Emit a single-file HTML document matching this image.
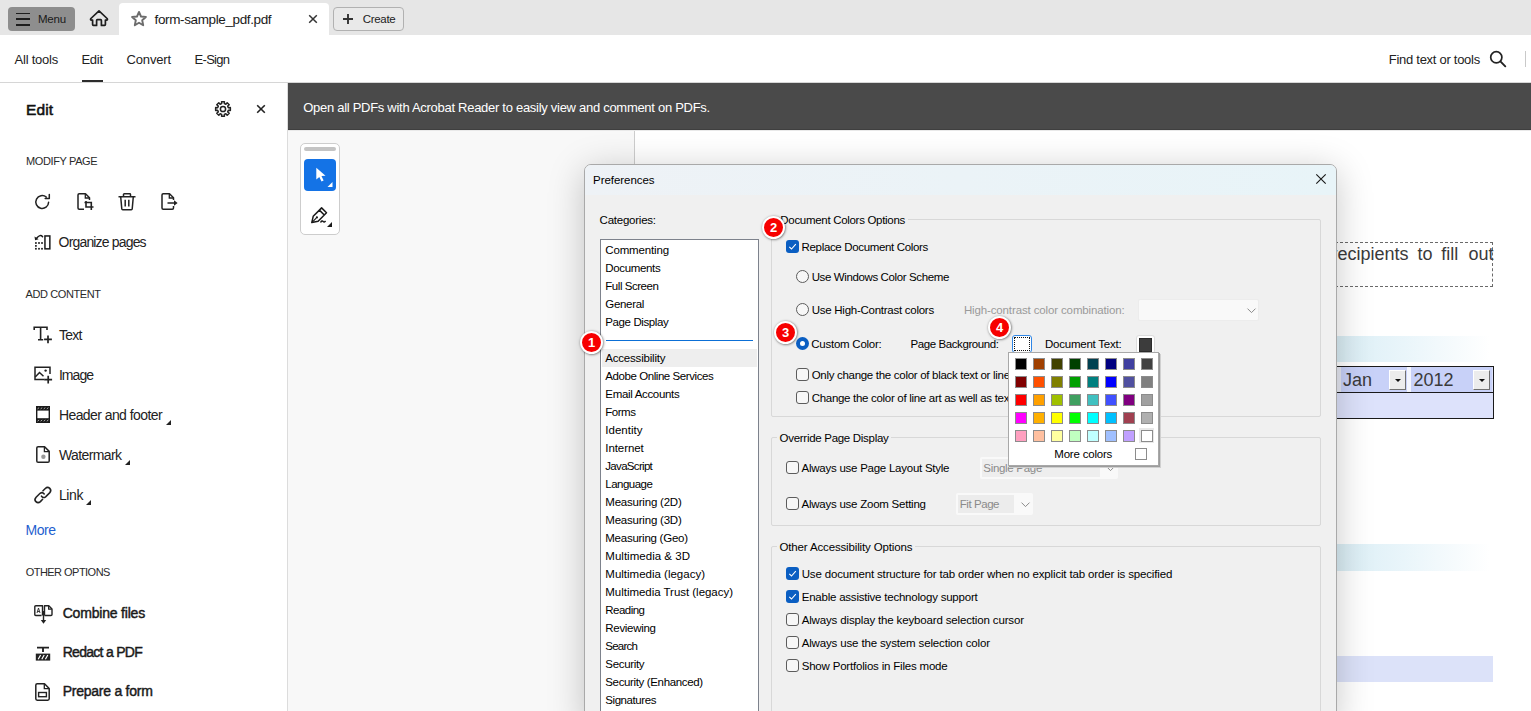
<!DOCTYPE html>
<html><head><meta charset="utf-8">
<style>
*{box-sizing:border-box;margin:0;padding:0}
html,body{width:1531px;height:711px;overflow:hidden;background:#fff;font-family:"Liberation Sans",sans-serif;position:relative}
.a{position:absolute}
.t{position:absolute;white-space:nowrap;line-height:0;font-family:"Liberation Sans",sans-serif}
svg{position:absolute;overflow:visible}
.cb{position:absolute;width:13px;height:13px;border:1px solid #5c5c5c;border-radius:3px;background:#f7f7f7}
.cbc{position:absolute;width:13px;height:13px;border-radius:3px;background:#0a5ec2}
.rd{position:absolute;width:13px;height:13px;border:1px solid #5c5c5c;border-radius:50%;background:#f7f7f7}
.grp{position:absolute;border:1px solid #d8d8d8;border-radius:2px}
.sw{position:absolute;width:12px;height:12px;border:1px solid #8c8c8c}
.badge{position:absolute;width:23px;height:23px;border-radius:50%;background:#f70000;border:2.5px solid #fff;box-shadow:0.5px 0.5px 2.5px rgba(0,0,0,.6);color:#fff;font:bold 13px/19.5px "Liberation Sans",sans-serif;text-align:center}
</style></head><body>
<!-- top bar -->
<div class="a" style="left:0;top:0;width:1531px;height:35px;background:#e6e6e6"></div>
<div class="a" style="left:8px;top:7px;width:67px;height:24px;background:#8e8e8e;border-radius:4px"></div>
<div class="a" style="left:16px;top:12.5px;width:14px;height:1.6px;background:#1e1e1e"></div>
<div class="a" style="left:16px;top:18.3px;width:14px;height:1.6px;background:#1e1e1e"></div>
<div class="a" style="left:16px;top:24px;width:14px;height:1.6px;background:#1e1e1e"></div>
<svg style="left:89px;top:10px" width="20" height="17" viewBox="0 0 20 17"><path d="M10 0.9 L1.9 8.5 Q0.9 9.9 2.6 10.1 H3.6 V14.6 Q3.6 15.4 4.4 15.4 H7.6 V10.5 Q7.6 9.7 8.4 9.7 H11.6 Q12.4 9.7 12.4 10.5 V15.4 H15.6 Q16.4 15.4 16.4 14.6 V10.1 H17.4 Q19.1 9.9 18.1 8.5 Z" fill="none" stroke="#1e1e1e" stroke-width="1.7" stroke-linejoin="round"/></svg>
<div class="a" style="left:119px;top:3px;width:210px;height:33px;background:#fff;border-radius:4px 4px 0 0"></div>
<svg style="left:130px;top:10px" width="18" height="18" viewBox="0 0 18 18"><path d="M9 1.9 L11 6.5 L15.9 7 L12.2 10.3 L13.2 15.3 L9 12.8 L4.8 15.3 L5.8 10.3 L2.1 7 L7 6.5 Z" fill="none" stroke="#6c6c6c" stroke-width="1.9" stroke-linejoin="round"/></svg>
<svg style="left:308px;top:14px" width="10" height="10" viewBox="0 0 10 10"><path d="M1.2 1.2 L8.8 8.8 M8.8 1.2 L1.2 8.8" stroke="#333" stroke-width="1.5"/></svg>
<div class="a" style="left:333px;top:7px;width:71px;height:24px;border:1px solid #b1b1b1;border-radius:4px;background:#e9e9e9"></div>
<svg style="left:343px;top:14px" width="10" height="10" viewBox="0 0 10 10"><path d="M5 0 V10 M0 5 H10" stroke="#333" stroke-width="1.9"/></svg>
<!-- nav -->
<div class="a" style="left:0;top:82px;width:1531px;height:1px;background:#d6d6d6"></div>
<div class="a" style="left:82px;top:80px;width:21px;height:2px;background:#2c2c2c"></div>
<svg style="left:1489px;top:50px" width="18" height="18" viewBox="0 0 18 18"><circle cx="7.3" cy="7.3" r="5.6" fill="none" stroke="#222" stroke-width="1.7"/><path d="M11.4 11.4 L16.3 16.3" stroke="#222" stroke-width="1.9" stroke-linecap="round"/></svg>
<div class="a" style="left:1525px;top:51px;width:1px;height:16px;background:#c9c9c9"></div>
<!-- sidebar -->
<div class="a" style="left:287px;top:83px;width:1px;height:628px;background:#dcdcdc"></div>
<svg style="left:214px;top:100px" width="18" height="18" viewBox="0 0 18 18"><path d="M14.34 7.67 L16.36 7.57 L16.36 10.43 L14.34 10.33 L13.71 11.83 L15.22 13.19 L13.19 15.22 L11.83 13.71 L10.33 14.34 L10.43 16.36 L7.57 16.36 L7.67 14.34 L6.17 13.71 L4.81 15.22 L2.78 13.19 L4.29 11.83 L3.66 10.33 L1.64 10.43 L1.64 7.57 L3.66 7.67 L4.29 6.17 L2.78 4.81 L4.81 2.78 L6.17 4.29 L7.67 3.66 L7.57 1.64 L10.43 1.64 L10.33 3.66 L11.83 4.29 L13.19 2.78 L15.22 4.81 L13.71 6.17 Z" fill="none" stroke="#222" stroke-width="1.5" stroke-linejoin="round"/><circle cx="9" cy="9" r="2.6" fill="none" stroke="#222" stroke-width="1.5"/></svg>
<svg style="left:256px;top:104px" width="10" height="10" viewBox="0 0 10 10"><path d="M1.2 1.2 L8.8 8.8 M8.8 1.2 L1.2 8.8" stroke="#222" stroke-width="1.6"/></svg>
<!-- modify page icons -->
<svg style="left:34px;top:193px" width="18" height="18" viewBox="0 0 18 18"><path d="M14.6 9.2 A6.4 6.4 0 1 1 12.3 4.1" fill="none" stroke="#222" stroke-width="1.5" stroke-linecap="round"/><path d="M15.3 1.5 V5.6 H11.2" fill="none" stroke="#222" stroke-width="1.5" stroke-linejoin="round" stroke-linecap="round"/></svg>
<svg style="left:77px;top:193px" width="18" height="18" viewBox="0 0 18 18"><path d="M7 16.3 H2.2 Q1 16.3 1 15.1 V1.9 Q1 0.8 2.2 0.8 H8.5 L12.5 4.8 V7" fill="none" stroke="#222" stroke-width="1.5" stroke-linejoin="round"/><path d="M8.3 0.9 V5 H12.4" fill="none" stroke="#222" stroke-width="1.3"/><path d="M9 8 V14 H16.5 M7.5 9.5 H14.3 V17" fill="none" stroke="#222" stroke-width="1.6"/></svg>
<svg style="left:118px;top:193px" width="18" height="18" viewBox="0 0 18 18"><path d="M0.5 3.7 H17.5 M5.5 3.7 V1.5 Q5.5 0.8 6.3 0.8 H11.7 Q12.5 0.8 12.5 1.5 V3.7 M2.7 3.7 L3.8 16 Q3.9 16.8 4.7 16.8 H13.3 Q14.1 16.8 14.2 16 L15.3 3.7 M7.2 6.8 V13.6 M10.8 6.8 V13.6" fill="none" stroke="#222" stroke-width="1.5" stroke-linejoin="round"/></svg>
<svg style="left:161px;top:193px" width="18" height="18" viewBox="0 0 18 18"><path d="M12.5 13 V15.1 Q12.5 16.3 11.3 16.3 H2.2 Q1 16.3 1 15.1 V1.9 Q1 0.8 2.2 0.8 H8.5 L12.5 4.8 V7" fill="none" stroke="#222" stroke-width="1.5" stroke-linejoin="round"/><path d="M8.3 0.9 V5 H12.4" fill="none" stroke="#222" stroke-width="1.3"/><path d="M6.5 10 H14.8" stroke="#222" stroke-width="1.5"/><path d="M13 7.3 L16.6 10 L13 12.7 Z" fill="#222"/></svg>
<!-- organize pages -->
<svg style="left:34px;top:234px" width="18" height="17" viewBox="0 0 18 17"><rect x="1.05" y="8.15" width="1.7" height="1.7" fill="#1a1a1a"/><rect x="4.15" y="8.15" width="1.7" height="1.7" fill="#1a1a1a"/><rect x="7.15" y="8.15" width="1.7" height="1.7" fill="#1a1a1a"/><rect x="1.05" y="11.05" width="1.7" height="1.7" fill="#1a1a1a"/><rect x="1.05" y="13.90" width="1.7" height="1.7" fill="#1a1a1a"/><rect x="4.15" y="13.90" width="1.7" height="1.7" fill="#1a1a1a"/><rect x="7.15" y="13.90" width="1.7" height="1.7" fill="#1a1a1a"/><rect x="10.95" y="1.95" width="4.9" height="12.9" fill="none" stroke="#1a1a1a" stroke-width="1.5"/><path d="M8.6 2.7 Q6.2 -0.2 2.6 4.2" fill="none" stroke="#1a1a1a" stroke-width="1.5" stroke-linecap="round"/><path d="M0.5 2.6 L1.1 6.2 L4.6 5.3 Z" fill="#1a1a1a"/></svg>
<!-- add content icons -->
<svg style="left:33px;top:326px" width="20" height="18" viewBox="0 0 20 18"><path d="M1.2 4 V1.3 H14 V4 M7.6 1.3 V13.8 M5 13.8 H10.2" fill="none" stroke="#222" stroke-width="1.6"/><path d="M15 9.5 V17.3 M11.1 13.4 H18.9" stroke="#222" stroke-width="1.7"/></svg>
<svg style="left:34px;top:366px" width="19" height="18" viewBox="0 0 19 18"><path d="M10.5 13.5 H1 V1.2 H16 V8" fill="none" stroke="#222" stroke-width="1.5"/><path d="M1.2 11 L5.5 6.5 L9.5 10.2" fill="none" stroke="#222" stroke-width="1.5"/><circle cx="11.6" cy="4.6" r="1.2" fill="#222"/><path d="M14.2 9.7 V17.5 M10.3 13.6 H18.1" stroke="#222" stroke-width="1.7"/></svg>
<svg style="left:35px;top:405px" width="16" height="19" viewBox="0 0 16 19"><rect x="1" y="1" width="14" height="17" fill="#1a1a1a"/><rect x="2.4" y="5.6" width="11.2" height="7.6" fill="#fff"/><path d="M2.5 3.9 L4.1 2.7" stroke="#aaa" stroke-width="1"/><path d="M5.6 3.9 L7.2 2.7" stroke="#aaa" stroke-width="1"/><path d="M8.7 3.9 L10.3 2.7" stroke="#aaa" stroke-width="1"/><path d="M11.8 3.9 L13.4 2.7" stroke="#aaa" stroke-width="1"/><path d="M2.5 16.2 L4.1 15.0" stroke="#aaa" stroke-width="1"/><path d="M5.6 16.2 L7.2 15.0" stroke="#aaa" stroke-width="1"/><path d="M8.7 16.2 L10.3 15.0" stroke="#aaa" stroke-width="1"/><path d="M11.8 16.2 L13.4 15.0" stroke="#aaa" stroke-width="1"/></svg>
<div class="a" style="left:166px;top:420px;width:0;height:0;border-left:5px solid transparent;border-bottom:5px solid #222"></div>
<svg style="left:36px;top:446px" width="15" height="17" viewBox="0 0 15 17"><path d="M8.6 0.8 H2.1 Q0.8 0.8 0.8 2.1 V14.9 Q0.8 16.2 2.1 16.2 H11.9 Q13.2 16.2 13.2 14.9 V5.4 Z" fill="none" stroke="#222" stroke-width="1.5" stroke-linejoin="round"/><path d="M8.4 1 V5.6 H13" fill="none" stroke="#222" stroke-width="1.3"/><circle cx="7.4" cy="10.8" r="2.2" fill="#999"/></svg>
<div class="a" style="left:125px;top:460px;width:0;height:0;border-left:5px solid transparent;border-bottom:5px solid #222"></div>
<svg style="left:34px;top:486px" width="18" height="18" viewBox="0 0 18 18"><path d="M9 4.8 L11.3 2.5 Q13.6 0.4 15.8 2.4 Q17.8 4.6 15.6 6.9 L11.6 10.8 Q9.3 12.5 7.5 10.2 M8.6 13.3 L6.4 15.6 Q4.1 17.7 1.9 15.7 Q-0.1 13.5 2.1 11.2 L6.1 7.3 Q8.4 5.6 10.2 7.9" fill="none" stroke="#222" stroke-width="1.6" stroke-linecap="round"/></svg>
<div class="a" style="left:86px;top:500px;width:0;height:0;border-left:5px solid transparent;border-bottom:5px solid #222"></div>
<!-- other options icons -->
<svg style="left:34px;top:605px" width="19" height="20" viewBox="0 0 19 20"><path d="M7.5 10.5 H1.8 Q0.8 10.5 0.8 9.5 V1.8 Q0.8 0.8 1.8 0.8 H8.5 V10.5 M10.5 10.5 H17 Q18 10.5 18 9.5 V4 L14.8 0.8 H10.5 V10.5" fill="none" stroke="#222" stroke-width="1.4" stroke-linejoin="round"/><path d="M14.6 1 V4.2 H17.8" fill="none" stroke="#222" stroke-width="1.2"/><path d="M9.5 6 V17" stroke="#222" stroke-width="1.4"/><path d="M6.8 15 L9.5 18.8 L12.2 15 Z" fill="#222"/><path d="M3 8 L4.5 3 L6 8 M3.5 6.5 H5.5" fill="none" stroke="#222" stroke-width="0.9"/></svg>
<svg style="left:35px;top:645px" width="16" height="16" viewBox="0 0 16 16"><path d="M2 2.6 H14 M8 2.6 V7" stroke="#222" stroke-width="1.9"/><rect x="0.8" y="8.6" width="14.4" height="7" fill="#222"/><path d="M3.2 14.3 L5.6 10 M6.8 14.3 L9.2 10 M10.4 14.3 L12.8 10" stroke="#fff" stroke-width="1.2"/></svg>
<svg style="left:35px;top:683px" width="15" height="18" viewBox="0 0 15 18"><path d="M9.5 0.8 H2.2 Q0.8 0.8 0.8 2.2 V15.8 Q0.8 17.2 2.2 17.2 H12.8 Q14.2 17.2 14.2 15.8 V5.5 Z" fill="none" stroke="#222" stroke-width="1.5" stroke-linejoin="round"/><path d="M9.3 1 V5.6 H14" fill="none" stroke="#222" stroke-width="1.3"/><rect x="3.6" y="9.5" width="7.8" height="4.2" fill="none" stroke="#222" stroke-width="1.4"/></svg>
<!-- banner -->
<div class="a" style="left:288px;top:83px;width:1243px;height:47px;background:#4a4a4a"></div>
<!-- viewer -->
<div class="a" style="left:288px;top:130px;width:346px;height:581px;background:#f8f8f8"></div>
<div class="a" style="left:634px;top:130px;width:1px;height:581px;background:#cdcdcd"></div>
<div class="a" style="left:288px;top:129px;width:1243px;height:1px;background:#3f3f3f"></div>
<div class="a" style="left:288px;top:130px;width:1243px;height:1px;background:#e9e9e9"></div>
<!-- floating toolbar -->
<div class="a" style="left:300px;top:143px;width:40px;height:92px;background:#fff;border:1px solid #cdcdcd;border-radius:5px"></div>
<div class="a" style="left:304px;top:147px;width:32px;height:4px;background:#c4c4c4;border-radius:2px"></div>
<div class="a" style="left:304px;top:159px;width:32px;height:32px;background:#1473e6;border-radius:4px"></div>
<svg style="left:315px;top:167px" width="20" height="22" viewBox="0 0 20 22"><path d="M1.3 0.8 L1.3 12.6 L4.3 9.9 L6.5 14.5 L8.6 13.5 L6.5 8.9 L10.5 8.7 Z" fill="#fff"/><path d="M17.5 15 V20 H12.5 Z" fill="#fff"/></svg>
<svg style="left:310px;top:205px" width="24" height="24" viewBox="0 0 24 24"><path d="M1.8 17.6 L3.2 11.3 L9.4 5.1 L14.3 10 L8.1 16.2 Z M9.4 5.1 L11.6 2.9 L16.5 7.8 L14.3 10" fill="none" stroke="#1a1a1a" stroke-width="1.5" stroke-linejoin="round"/><path d="M1.8 17.6 L6.2 13.2" stroke="#1a1a1a" stroke-width="1.2"/><circle cx="6.9" cy="12.4" r="1.1" fill="#1a1a1a"/><path d="M10.5 17.5 Q12 15 13.2 16.5 Q14.2 17.8 15.6 16" fill="none" stroke="#1a1a1a" stroke-width="1.4"/><path d="M22 17 V22 H17 Z" fill="#1a1a1a"/></svg>
<!-- pdf page content (right side) -->
<div class="a" style="left:1200px;top:242px;width:293px;height:45px;border:1px dashed #6a6a6a"></div>
<div class="t" style="right:122.4px;top:254.2px;font-size:18px;color:#3a3a3a">the form allows recipients</div>
<div class="t" style="right:98.4px;top:254.2px;font-size:18px;color:#3a3a3a">to</div>
<div class="t" style="right:72.8px;top:254.2px;font-size:18px;color:#3a3a3a">fill</div>
<div class="t" style="right:37.4px;top:254.2px;font-size:18px;color:#3a3a3a">out</div>
<div class="a" style="left:1200px;top:336px;width:290px;height:26px;background:linear-gradient(90deg,#d6ecf4 0%,#d6ecf4 40%,#e9f5fa 70%,#ffffff 100%)"></div>
<div class="a" style="left:1200px;top:366px;width:294px;height:53px;border:1px solid #1a1a1a;background:#dde2fb"></div>
<div class="a" style="left:1201px;top:392px;width:292px;height:1px;background:#1a1a1a"></div>
<div class="a" style="left:1201px;top:367px;width:140px;height:25px;background:#e6e8f2"></div>
<div class="a" style="left:1341px;top:367px;width:66px;height:25px;background:#c8d1f8"></div>
<div class="a" style="left:1407px;top:367px;width:4px;height:25px;background:#f4f6fe"></div>
<div class="a" style="left:1411px;top:367px;width:81px;height:25px;background:#c8d1f8"></div>
<div class="a" style="left:1389px;top:370px;width:17px;height:20px;background:#ececec;border:1px solid #fff;border-right-color:#707070;border-bottom-color:#707070"></div>
<div class="a" style="left:1394.5px;top:378.5px;width:0;height:0;border-left:3px solid transparent;border-right:3px solid transparent;border-top:3px solid #111"></div>
<div class="a" style="left:1473px;top:370px;width:17px;height:20px;background:#ececec;border:1px solid #fff;border-right-color:#707070;border-bottom-color:#707070"></div>
<div class="a" style="left:1478.5px;top:378.5px;width:0;height:0;border-left:3px solid transparent;border-right:3px solid transparent;border-top:3px solid #111"></div>
<div class="t" style="left:1343px;top:379.8px;font-size:18px;color:#3a3a3a">Jan</div>
<div class="t" style="left:1413.5px;top:379.8px;font-size:18px;color:#3a3a3a">2012</div>
<div class="a" style="left:1200px;top:544px;width:290px;height:27px;background:linear-gradient(90deg,#d6ecf4 0%,#d6ecf4 40%,#e9f5fa 70%,#ffffff 100%)"></div>
<div class="a" style="left:1200px;top:656px;width:293px;height:26px;background:#dce2f9"></div>
<!-- dialog -->
<div class="a" style="left:584px;top:164px;width:753px;height:560px;background:#f0f0f0;border:1px solid #a9a9a9;border-radius:7px 7px 0 0;box-shadow:0 6px 36px rgba(0,0,0,.22)"></div>
<div class="a" style="left:585px;top:165px;width:751px;height:30px;background:linear-gradient(90deg,#eef2f6,#e8f4f8);border-radius:6px 6px 0 0"></div>
<svg style="left:1316px;top:174px" width="10" height="10" viewBox="0 0 10 10"><path d="M0.3 0.3 L9.7 9.7 M9.7 0.3 L0.3 9.7" stroke="#1a1a1a" stroke-width="1.15"/></svg>
<!-- categories list -->
<div class="a" style="left:600px;top:239px;width:159px;height:480px;background:#fff;border:1px solid #7d828c"></div>
<div class="a" style="left:606px;top:339.5px;width:147px;height:1.5px;background:#0b6fd6"></div>
<div class="a" style="left:602px;top:349px;width:155px;height:18px;background:#eeeeee"></div>
<!-- group boxes -->
<div class="grp" style="left:771px;top:219px;width:550px;height:198px"></div>
<div class="a" style="left:777px;top:214px;width:131px;height:10px;background:#f0f0f0"></div>
<div class="grp" style="left:771px;top:437px;width:550px;height:89px"></div>
<div class="a" style="left:777px;top:432px;width:114px;height:10px;background:#f0f0f0"></div>
<div class="grp" style="left:771px;top:546px;width:550px;height:200px"></div>
<div class="a" style="left:777px;top:541px;width:138px;height:10px;background:#f0f0f0"></div>
<!-- controls -->
<div class="cbc" style="left:786px;top:240px"></div>
<svg style="left:786px;top:240px" width="13" height="13" viewBox="0 0 13 13"><path d="M3.3 6.8 L5.5 9 L9.8 4.2" fill="none" stroke="#fff" stroke-width="1.1"/></svg>
<div class="rd" style="left:796px;top:270px"></div>
<div class="rd" style="left:796px;top:303px"></div>
<div class="a" style="left:796px;top:337px;width:13px;height:13px;border-radius:50%;background:#0a5ec2"></div>
<div class="a" style="left:800px;top:341px;width:5px;height:5px;border-radius:50%;background:#fff"></div>
<div class="cb" style="left:796px;top:368px"></div>
<div class="cb" style="left:796px;top:391px"></div>
<div class="a" style="left:1138px;top:299px;width:121px;height:22px;background:#f9f9f9;border:1px solid #ececec;border-radius:2px"></div>
<svg style="left:1247px;top:308px" width="9" height="6" viewBox="0 0 9 6"><path d="M0.5 0.6 L4.5 4.6 L8.5 0.6" fill="none" stroke="#8a8a8a" stroke-width="1"/></svg>
<!-- swatches -->
<div class="a" style="left:1012px;top:335px;width:20px;height:18px;border:1.5px solid #2f86e6;border-radius:3px;background:#fff"></div>
<div class="a" style="left:1014px;top:337px;width:16px;height:14px;border:1px dotted #111"></div>
<div class="a" style="left:1136px;top:335px;width:19px;height:19px;border:1px solid #dcdcdc;border-radius:3px;background:#fff"></div>
<div class="a" style="left:1139px;top:338px;width:13px;height:14px;background:#3c3c3c;border:1px solid #2a2a2a"></div>
<div class="cb" style="left:786px;top:461px"></div>
<div class="a" style="left:980px;top:457px;width:138px;height:22px;background:#f9f9f9;border-radius:2px"></div>
<div class="a" style="left:982px;top:459px;width:118px;height:18px;background:#eeeeee"></div>
<svg style="left:1106px;top:466px" width="9" height="6" viewBox="0 0 9 6"><path d="M0.5 0.6 L4.5 4.6 L8.5 0.6" fill="none" stroke="#8a8a8a" stroke-width="1"/></svg>
<div class="cb" style="left:786px;top:497px"></div>
<div class="a" style="left:956px;top:493px;width:77px;height:22px;background:#f9f9f9;border-radius:2px"></div>
<div class="a" style="left:958px;top:495px;width:56px;height:18px;background:#ececec"></div>
<svg style="left:1021px;top:502px" width="9" height="6" viewBox="0 0 9 6"><path d="M0.5 0.6 L4.5 4.6 L8.5 0.6" fill="none" stroke="#8a8a8a" stroke-width="1"/></svg>
<div class="cbc" style="left:786px;top:567px"></div>
<svg style="left:786px;top:567px" width="13" height="13" viewBox="0 0 13 13"><path d="M3.3 6.8 L5.5 9 L9.8 4.2" fill="none" stroke="#fff" stroke-width="1.1"/></svg>
<div class="cbc" style="left:786px;top:590px"></div>
<svg style="left:786px;top:590px" width="13" height="13" viewBox="0 0 13 13"><path d="M3.3 6.8 L5.5 9 L9.8 4.2" fill="none" stroke="#fff" stroke-width="1.1"/></svg>
<div class="cb" style="left:786px;top:613px"></div>
<div class="cb" style="left:786px;top:636px"></div>
<div class="cb" style="left:786px;top:659px"></div>
<div class="t" style="left:37.9px;top:19px;font-size:11.5px;color:#1a1a1a;letter-spacing:-0.160px;">Menu</div>
<div class="t" style="left:154.6px;top:20px;font-size:13.5px;color:#1a1a1a;letter-spacing:-0.378px;">form-sample_pdf.pdf</div>
<div class="t" style="left:362.7px;top:19px;font-size:11.5px;color:#222;letter-spacing:-0.306px;">Create</div>
<div class="t" style="left:14.5px;top:60px;font-size:13px;color:#222;letter-spacing:-0.216px;">All tools</div>
<div class="t" style="left:81.5px;top:60px;font-size:13px;color:#222;letter-spacing:-0.302px;">Edit</div>
<div class="t" style="left:126.6px;top:60px;font-size:13px;color:#222;letter-spacing:-0.172px;">Convert</div>
<div class="t" style="left:194.5px;top:60px;font-size:13px;color:#222;letter-spacing:-0.686px;">E-Sign</div>
<div class="t" style="left:1388.8px;top:60px;font-size:13px;color:#222;letter-spacing:-0.277px;">Find text or tools</div>
<div class="t" style="left:26.0px;top:110px;font-size:15.5px;color:#111;letter-spacing:0.094px;-webkit-text-stroke:0.55px #111;">Edit</div>
<div class="t" style="left:26.1px;top:161px;font-size:11px;color:#2a2a2a;letter-spacing:-0.389px;">MODIFY PAGE</div>
<div class="t" style="left:58.6px;top:242px;font-size:14px;color:#222;letter-spacing:-0.834px;">Organize pages</div>
<div class="t" style="left:25.5px;top:294px;font-size:11px;color:#2a2a2a;letter-spacing:-0.385px;">ADD CONTENT</div>
<div class="t" style="left:58.9px;top:335px;font-size:14px;color:#222;letter-spacing:-0.696px;">Text</div>
<div class="t" style="left:58.9px;top:375px;font-size:14px;color:#222;letter-spacing:-0.930px;">Image</div>
<div class="t" style="left:58.9px;top:415px;font-size:14px;color:#222;letter-spacing:-0.572px;">Header and footer</div>
<div class="t" style="left:58.9px;top:455px;font-size:14px;color:#222;letter-spacing:-0.592px;">Watermark</div>
<div class="t" style="left:58.9px;top:495px;font-size:14px;color:#222;letter-spacing:-0.363px;">Link</div>
<div class="t" style="left:25.6px;top:530px;font-size:14px;color:#1f5fcf;letter-spacing:-0.469px;">More</div>
<div class="t" style="left:25.7px;top:572px;font-size:11px;color:#2a2a2a;letter-spacing:-0.530px;">OTHER OPTIONS</div>
<div class="t" style="left:62.7px;top:613px;font-size:14px;color:#1a1a1a;letter-spacing:-0.194px;-webkit-text-stroke:0.45px #1a1a1a;">Combine files</div>
<div class="t" style="left:62.7px;top:652px;font-size:14px;color:#1a1a1a;letter-spacing:-0.713px;-webkit-text-stroke:0.45px #1a1a1a;">Redact a PDF</div>
<div class="t" style="left:62.7px;top:691px;font-size:14px;color:#1a1a1a;letter-spacing:-0.244px;-webkit-text-stroke:0.45px #1a1a1a;">Prepare a form</div>
<div class="t" style="left:303.2px;top:108px;font-size:13px;color:#fff;letter-spacing:-0.284px;">Open all PDFs with Acrobat Reader to easily view and comment on PDFs.</div>
<div class="t" style="left:593.1px;top:180px;font-size:11.5px;color:#000;letter-spacing:-0.052px;">Preferences</div>
<div class="t" style="left:599.6px;top:220px;font-size:11.5px;color:#000;letter-spacing:-0.241px;">Categories:</div>
<div class="t" style="left:605.3px;top:250px;font-size:11.5px;color:#000;letter-spacing:-0.156px;">Commenting</div>
<div class="t" style="left:605.3px;top:268px;font-size:11.5px;color:#000;letter-spacing:-0.346px;">Documents</div>
<div class="t" style="left:605.3px;top:286px;font-size:11.5px;color:#000;letter-spacing:-0.457px;">Full Screen</div>
<div class="t" style="left:605.3px;top:304px;font-size:11.5px;color:#000;letter-spacing:-0.320px;">General</div>
<div class="t" style="left:605.3px;top:322px;font-size:11.5px;color:#000;letter-spacing:-0.388px;">Page Display</div>
<div class="t" style="left:605.3px;top:358px;font-size:11.5px;color:#000;letter-spacing:-0.203px;">Accessibility</div>
<div class="t" style="left:605.3px;top:376px;font-size:11.5px;color:#000;letter-spacing:-0.429px;">Adobe Online Services</div>
<div class="t" style="left:605.3px;top:394px;font-size:11.5px;color:#000;letter-spacing:-0.325px;">Email Accounts</div>
<div class="t" style="left:605.3px;top:412px;font-size:11.5px;color:#000;letter-spacing:-0.498px;">Forms</div>
<div class="t" style="left:605.3px;top:430px;font-size:11.5px;color:#000;letter-spacing:0.017px;">Identity</div>
<div class="t" style="left:605.3px;top:448px;font-size:11.5px;color:#000;letter-spacing:-0.086px;">Internet</div>
<div class="t" style="left:605.3px;top:466px;font-size:11.5px;color:#000;letter-spacing:-0.688px;">JavaScript</div>
<div class="t" style="left:605.3px;top:484px;font-size:11.5px;color:#000;letter-spacing:-0.525px;">Language</div>
<div class="t" style="left:605.3px;top:502px;font-size:11.5px;color:#000;letter-spacing:-0.212px;">Measuring (2D)</div>
<div class="t" style="left:605.3px;top:520px;font-size:11.5px;color:#000;letter-spacing:-0.212px;">Measuring (3D)</div>
<div class="t" style="left:605.3px;top:538px;font-size:11.5px;color:#000;letter-spacing:-0.257px;">Measuring (Geo)</div>
<div class="t" style="left:605.3px;top:556px;font-size:11.5px;color:#000;letter-spacing:0.023px;">Multimedia &amp; 3D</div>
<div class="t" style="left:605.3px;top:574px;font-size:11.5px;color:#000;">Multimedia (legacy)</div>
<div class="t" style="left:605.3px;top:592px;font-size:11.5px;color:#000;letter-spacing:-0.032px;">Multimedia Trust (legacy)</div>
<div class="t" style="left:605.3px;top:610px;font-size:11.5px;color:#000;letter-spacing:-0.524px;">Reading</div>
<div class="t" style="left:605.3px;top:628px;font-size:11.5px;color:#000;letter-spacing:-0.295px;">Reviewing</div>
<div class="t" style="left:605.3px;top:646px;font-size:11.5px;color:#000;letter-spacing:-0.747px;">Search</div>
<div class="t" style="left:605.3px;top:664px;font-size:11.5px;color:#000;letter-spacing:-0.321px;">Security</div>
<div class="t" style="left:605.3px;top:682px;font-size:11.5px;color:#000;letter-spacing:-0.356px;">Security (Enhanced)</div>
<div class="t" style="left:605.3px;top:700px;font-size:11.5px;color:#000;letter-spacing:-0.432px;">Signatures</div>
<div class="t" style="left:780.3px;top:220px;font-size:11.5px;color:#000;letter-spacing:-0.303px;">Document Colors Options</div>
<div class="t" style="left:801.6px;top:247px;font-size:11.5px;color:#000;letter-spacing:-0.342px;">Replace Document Colors</div>
<div class="t" style="left:811.7px;top:277px;font-size:11.5px;color:#000;letter-spacing:-0.381px;">Use Windows Color Scheme</div>
<div class="t" style="left:811.7px;top:310px;font-size:11.5px;color:#000;letter-spacing:-0.260px;">Use High-Contrast colors</div>
<div class="t" style="left:963.9px;top:310px;font-size:11.5px;color:#9a9a9a;letter-spacing:-0.130px;">High-contrast color combination:</div>
<div class="t" style="left:811.3px;top:344px;font-size:11.5px;color:#000;letter-spacing:-0.250px;">Custom Color:</div>
<div class="t" style="left:910.6px;top:344px;font-size:11.5px;color:#000;letter-spacing:-0.422px;">Page Background:</div>
<div class="t" style="left:1045.0px;top:344px;font-size:11.5px;color:#000;letter-spacing:-0.230px;">Document Text:</div>
<div class="t" style="left:811.7px;top:375px;font-size:11.5px;color:#000;letter-spacing:-0.300px;">Only change the color of black text or line art</div>
<div class="t" style="left:811.7px;top:398px;font-size:11.5px;color:#000;letter-spacing:-0.300px;">Change the color of line art as well as text</div>
<div class="t" style="left:779.6px;top:438px;font-size:11.5px;color:#000;letter-spacing:-0.293px;">Override Page Display</div>
<div class="t" style="left:801.5px;top:468px;font-size:11.5px;color:#000;letter-spacing:-0.248px;">Always use Page Layout Style</div>
<div class="t" style="left:983.3px;top:468px;font-size:11.5px;color:#8a8a8a;letter-spacing:-0.300px;">Single Page</div>
<div class="t" style="left:801.5px;top:504px;font-size:11.5px;color:#000;letter-spacing:-0.239px;">Always use Zoom Setting</div>
<div class="t" style="left:959.7px;top:504px;font-size:11.5px;color:#8a8a8a;letter-spacing:-0.433px;">Fit Page</div>
<div class="t" style="left:779.5px;top:547px;font-size:11.5px;color:#000;letter-spacing:-0.149px;">Other Accessibility Options</div>
<div class="t" style="left:801.7px;top:574px;font-size:11.5px;color:#000;letter-spacing:-0.155px;">Use document structure for tab order when no explicit tab order is specified</div>
<div class="t" style="left:801.7px;top:597px;font-size:11.5px;color:#000;letter-spacing:-0.220px;">Enable assistive technology support</div>
<div class="t" style="left:801.7px;top:620px;font-size:11.5px;color:#000;letter-spacing:-0.152px;">Always display the keyboard selection cursor</div>
<div class="t" style="left:801.7px;top:643px;font-size:11.5px;color:#000;letter-spacing:-0.149px;">Always use the system selection color</div>
<div class="t" style="left:801.7px;top:666px;font-size:11.5px;color:#000;letter-spacing:-0.196px;">Show Portfolios in Files mode</div>
<!-- color popup -->
<div class="a" style="left:1008px;top:352px;width:151px;height:114px;background:#fff;border:1px solid #a8a8a8;box-shadow:1px 1px 0 #9c9c9c,2px 2px 0 #d0d0d0"></div>
<div class="sw" style="left:1015px;top:358px;background:#000000"></div>
<div class="sw" style="left:1033px;top:358px;background:#a04000"></div>
<div class="sw" style="left:1051px;top:358px;background:#404000"></div>
<div class="sw" style="left:1069px;top:358px;background:#004000"></div>
<div class="sw" style="left:1087px;top:358px;background:#004050"></div>
<div class="sw" style="left:1105px;top:358px;background:#000080"></div>
<div class="sw" style="left:1123px;top:358px;background:#4040a0"></div>
<div class="sw" style="left:1141px;top:358px;background:#404040"></div>
<div class="sw" style="left:1015px;top:376px;background:#800000"></div>
<div class="sw" style="left:1033px;top:376px;background:#ff5000"></div>
<div class="sw" style="left:1051px;top:376px;background:#808000"></div>
<div class="sw" style="left:1069px;top:376px;background:#00a000"></div>
<div class="sw" style="left:1087px;top:376px;background:#008080"></div>
<div class="sw" style="left:1105px;top:376px;background:#0000ff"></div>
<div class="sw" style="left:1123px;top:376px;background:#5050a0"></div>
<div class="sw" style="left:1141px;top:376px;background:#808080"></div>
<div class="sw" style="left:1015px;top:394px;background:#ff0000"></div>
<div class="sw" style="left:1033px;top:394px;background:#ffa000"></div>
<div class="sw" style="left:1051px;top:394px;background:#a0c000"></div>
<div class="sw" style="left:1069px;top:394px;background:#40a060"></div>
<div class="sw" style="left:1087px;top:394px;background:#40c0c0"></div>
<div class="sw" style="left:1105px;top:394px;background:#4050ff"></div>
<div class="sw" style="left:1123px;top:394px;background:#800080"></div>
<div class="sw" style="left:1141px;top:394px;background:#a0a0a0"></div>
<div class="sw" style="left:1015px;top:412px;background:#ff00ff"></div>
<div class="sw" style="left:1033px;top:412px;background:#ffb000"></div>
<div class="sw" style="left:1051px;top:412px;background:#ffff00"></div>
<div class="sw" style="left:1069px;top:412px;background:#00ff00"></div>
<div class="sw" style="left:1087px;top:412px;background:#00ffff"></div>
<div class="sw" style="left:1105px;top:412px;background:#00c0ff"></div>
<div class="sw" style="left:1123px;top:412px;background:#a04050"></div>
<div class="sw" style="left:1141px;top:412px;background:#b0b0b0"></div>
<div class="sw" style="left:1015px;top:430px;background:#ffa0c0"></div>
<div class="sw" style="left:1033px;top:430px;background:#ffc0a0"></div>
<div class="sw" style="left:1051px;top:430px;background:#ffffa0"></div>
<div class="sw" style="left:1069px;top:430px;background:#c0ffc0"></div>
<div class="sw" style="left:1087px;top:430px;background:#c0ffff"></div>
<div class="sw" style="left:1105px;top:430px;background:#a0c0ff"></div>
<div class="sw" style="left:1123px;top:430px;background:#c0a0ff"></div>
<div class="a" style="left:1139px;top:428px;width:15px;height:15px;background:#e9e9e9"></div>
<div class="sw" style="left:1141px;top:430px;background:#fff"></div>
<div class="t" style="left:1054.3px;top:454px;font-size:11.5px;color:#000;letter-spacing:-0.208px;">More colors</div>
<div class="sw" style="left:1135px;top:448px;background:#fff"></div>
<!-- badges -->
<div class="badge" style="left:580px;top:331px">1</div>
<div class="badge" style="left:762px;top:216px">2</div>
<div class="badge" style="left:774px;top:321px">3</div>
<div class="badge" style="left:988px;top:316px">4</div>
</body></html>
